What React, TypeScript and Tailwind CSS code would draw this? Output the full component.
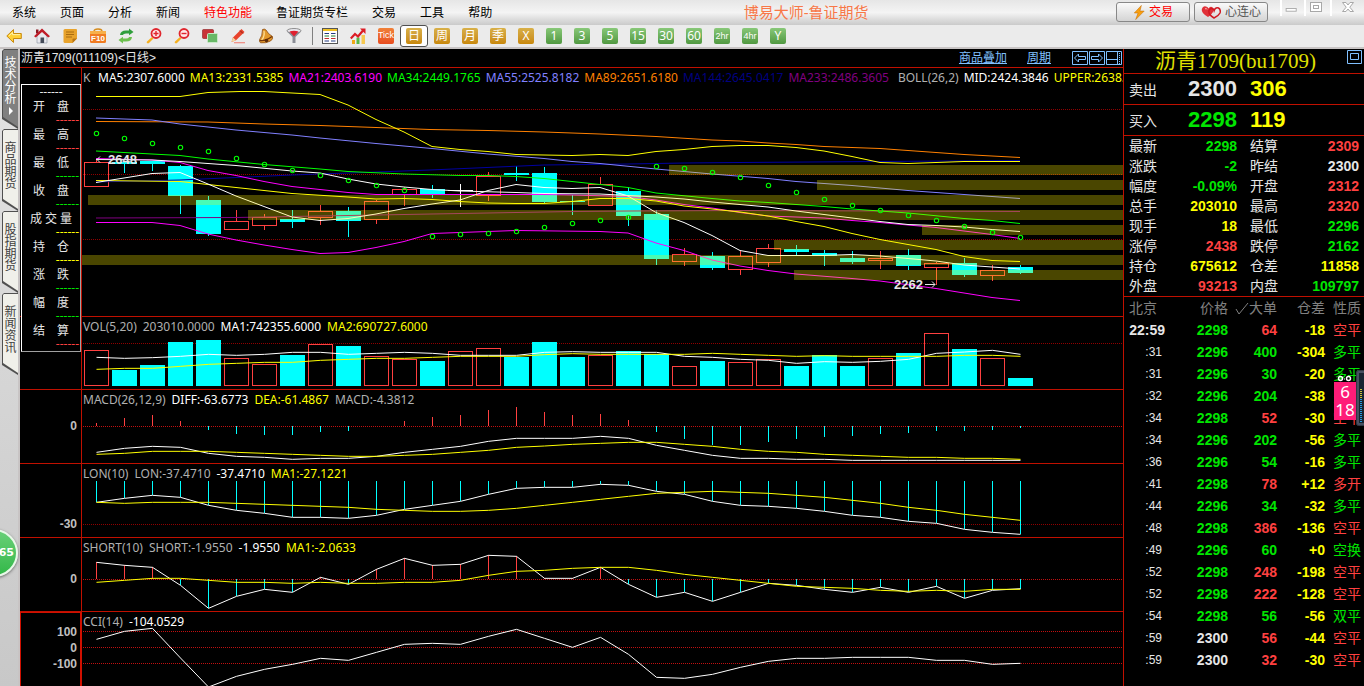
import React from "react";

const STEP = 28;
const FIRST = 14.5;
const px = (i: number) => FIRST + STEP * i;

/* ---------- price pane data (screen rows) ---------- */
const PRICE_TOP = 68;

// [kind, body top, body bottom, wick top, wick bottom]
type Candle = ["r" | "c" | "w", number, number, number, number];
const candles: Candle[] = [
  ["r", 162.5, 186.5, 160, 162], ["c", 162, 164, 162, 173], ["c", 161, 164, 161, 171], ["c", 166, 196, 165, 214],
  ["c", 200, 234, 196, 236], ["r", 221.5, 229.5, 210, 229], ["r", 217.5, 225.5, 214, 230], ["c", 219, 222, 210, 228],
  ["r", 211.5, 217.5, 205, 225], ["c", 211, 221, 207, 237], ["r", 201.5, 219.5, 200, 224], ["r", 189.5, 194.5, 187, 206],
  ["c", 189, 194, 185, 198], ["w", 190, 191, 184, 207], ["r", 176.5, 195.5, 172, 201], ["c", 173, 175, 166, 181],
  ["c", 173, 202, 167, 203], ["c", 201, 202, 195, 215], ["r", 184.5, 205.5, 177, 185], ["c", 191, 216, 187, 226],
  ["c", 214, 259, 210, 265], ["r", 254.5, 261.5, 248, 266], ["c", 256, 268, 252, 270], ["r", 256.5, 269.5, 251, 275],
  ["r", 248.5, 262.5, 244, 267], ["c", 249, 252, 245, 255], ["c", 253, 256, 250, 266], ["c", 258, 262, 251, 264],
  ["r", 258.5, 260.5, 251, 269], ["c", 255, 266, 249, 270], ["r", 263.5, 267.5, 262, 285], ["c", 263, 275, 258, 277],
  ["r", 270.5, 275.5, 265, 281], ["c", 267, 273, 265, 274],
];

const sar = [
  133.5, 138.5, 143.5, 147.5, 151.5, 158.5, 164.5, 170.5, 175.5, 180.5, 185.5, 190.5, 236.5, 234.5, 233.5, 231.5, 227.5,
  223.5, 220.5, 217.5, 166.5, 168.5, 172.5, 177.5, 185.5, 192.5, 199.5, 205.5, 210.5, 215.5, 220.5, 226.5, 232.5, 237.5,
];

// [left, top]
const bands: [number, number][] = [
  [88, 195], [248, 210], [82, 255], [669, 165], [817, 180], [922, 225], [774, 240], [794, 270],
];

const overlays: { color: string; pts: string }[] = [
  { color: "#800080", pts: "96,218 236,217.5 320,216 404,214.5 488,213 572,211.5 628,211 740,210.5 1020,211.5" },
  { color: "#0000a0", pts: "96,182 180,180 236,177.5 292,175 348,173 376,172 430,170 544,165 628,164 684,163 740,162.5 1020,160.5" },
  { color: "#ff8000", pts: "96,121.5 208,122 264,124 320,125.5 376,127.5 430,129.5 488,130.5 544,132 600,134 656,136.5 712,140 740,141 768,143 796,144.5 824,146.5 880,148.5 936,152.5 964,154.5 1020,157.5" },
  { color: "#8080ff", pts: "96,118 152,120 180,124 236,130 292,135 320,138 376,143.5 432,148.5 488,154 544,158.5 572,161.5 600,163.5 656,169 712,174 768,178.5 796,181.5 852,185.5 908,190.5 964,194.5 1020,198.5" },
  { color: "#00ff00", pts: "96,151 124,152.5 180,155.5 208,159 264,164.5 320,169 348,171.5 404,174 460,175.5 488,175.5 516,176.5 544,178.5 600,184.5 628,187.5 656,193 712,198.5 740,201 768,202.5 824,206.5 852,209 908,213 964,218.5 992,220.5 1020,223.5" },
  { color: "#ff00ff", pts: "96,158.5 152,160 180,162.5 208,170.5 236,175.5 264,181.5 292,186.5 348,192.5 376,194.5 544,194.5 572,195 628,196.5 656,200 684,204.5 712,208 740,212.5 768,216 796,217 824,218 852,220.5 880,222.5 908,225 936,227.5 964,231 992,234.5 1020,238.5" },
  { color: "#ffff00", pts: "96,180.5 180,181.5 208,184.5 236,187.5 292,193.5 348,197 376,199 404,198.5 432,199.5 460,201.5 488,203 516,203.5 544,203.5 572,201.5 600,198.5 628,198.5 656,201 684,206 740,212 768,216 796,221.5 824,226.5 852,233.5 880,239.5 908,244.5 936,249.5 964,256.5 992,260.5 1020,261.5" },
  { color: "#ffff00", pts: "96,96.5 180,96.5 208,92.5 240,91.5 264,91.5 292,93 320,94.5 348,105 376,119.5 404,132 432,146.5 460,149.5 488,151.5 516,154.5 544,155 572,155.5 600,154.5 628,155.5 656,151.5 684,149.5 712,146.5 740,145.5 768,145.5 796,147.5 824,151 852,156.5 880,162.5 908,163.5 936,162.5 964,161.5 1020,161.5" },
  { color: "#ff00ff", pts: "96,222.5 152,222.5 180,225.5 208,234 236,240 264,245 292,249.5 320,253.5 348,252.5 376,247.5 404,241.5 432,233.5 516,230.5 600,231.5 628,233 656,243 684,250.5 712,260 740,266 768,270.5 796,274 852,278.5 880,281 936,288.5 964,293 992,297.5 1020,300.5" },
  { color: "#ffffff", pts: "96,159.5 152,160 180,161.5 236,165.5 292,171 320,173 348,179 376,184 404,187 432,189.5 460,191 516,192.5 544,193.5 600,194 656,197 684,199 712,202 740,204.5 768,207 796,211 824,214.5 852,218 880,221.5 908,224.5 936,225.5 964,227 992,229.5 1020,231.5" },
  { color: "#ffffff", pts: "96,182.5 124,178 152,173.5 180,172.5 208,184 236,196 264,206.5 292,217 320,220.5 348,218.5 376,214 404,208.5 432,204 460,200 488,190.5 516,184.5 544,187.5 572,188.5 600,187.5 628,196 656,212.5 684,222.5 712,235.5 740,250.5 768,255.5 824,255.5 852,254.5 880,256 908,258.5 936,261 964,265 992,267 1020,269" },
];

/* ---------- indicator pane data, stored in thirds of a row counted from the top of the volume pane ---------- */
const volTops = [103, 162, 147, 78, 72, 127, 145, 117, 85, 90, 121, 130, 135, 106, 97, 123, 78, 123, 118, 105, 115, 151, 135, 139, 130, 150, 117, 150, 125, 111, 52, 99, 127, 186];
const volKinds = "rcccc" + "rrcrcr" + "rcrrcc" + "crccrc" + "rrcccr" + "crcrc";
const volMa1 = [124, 127, 125, 121, 115, 118, 115, 109, 109, 115, 112, 109, 112, 118, 118, 118, 109, 107, 109, 109, 109, 121, 124, 130, 133, 142, 137, 139, 136, 130, 112, 108, 103, 115];
const volMa2 = [160, 157, 157, 151, 145, 142, 139, 139, 133, 130, 127, 127, 124, 121, 121, 121, 116, 113, 115, 115, 115, 115, 112, 115, 118, 121, 119, 121, 121, 121, 121, 118, 118, 121];
const macd = [321, 306, 297, 315, 342, 354, 357, 357, 348, 345, 329, 315, 303, 297, 282, 273, 288, 297, 294, 312, 348, 369, 387, 387, 378, 369, 363, 360, 354, 351, 345, 345, 342, 336];
const diff = [409, 397, 391, 394, 412, 421, 424, 430, 427, 427, 421, 409, 400, 391, 376, 367, 367, 367, 361, 367, 388, 403, 418, 427, 427, 430, 430, 433, 433, 433, 433, 433, 433, 433];
const dea = [415, 412, 406, 406, 406, 409, 412, 415, 418, 421, 421, 418, 415, 409, 403, 394, 390, 385, 382, 379, 379, 385, 391, 400, 406, 409, 415, 418, 421, 424, 424, 427, 427, 430];
const lon = [559, 547, 538, 544, 568, 583, 592, 604, 604, 607, 598, 580, 568, 556, 535, 517, 514, 514, 505, 508, 526, 535, 556, 568, 571, 577, 586, 598, 604, 616, 622, 640, 649, 655];
const lonMa = [559, 562, 559, 559, 559, 562, 565, 568, 571, 574, 580, 583, 586, 586, 583, 577, 568, 559, 550, 541, 532, 529, 526, 529, 532, 538, 544, 553, 562, 574, 583, 595, 604, 613];
const short = [739, 748, 754, 808, 877, 841, 820, 829, 784, 805, 760, 727, 748, 745, 718, 721, 787, 787, 754, 805, 844, 829, 856, 829, 802, 808, 820, 829, 814, 829, 811, 847, 823, 818];
const shortMa = [799, 793, 787, 787, 793, 799, 799, 802, 799, 802, 802, 799, 799, 793, 778, 766, 763, 757, 754, 754, 763, 775, 784, 793, 802, 811, 814, 817, 823, 826, 823, 826, 820, 820];
const cci = [970, 946, 937, 1026, 1113, 1081, 1060, 1045, 1027, 1033, 1009, 985, 982, 985, 961, 940, 967, 994, 964, 1015, 1084, 1087, 1075, 1054, 1036, 1027, 1027, 1024, 1024, 1024, 1033, 1033, 1045, 1042];

const row = (v: number, top: number) => 316 + v / 3 - top;

function Grid({ y, color = "#c01010" }: { y: number; color?: string }) {
  return <line x1="1" x2="100%" y1={y} y2={y} stroke={color} strokeDasharray="1 1" shapeRendering="crispEdges" />;
}

function Series({ data, top, color }: { data: number[]; top: number; color: string }) {
  return <polyline fill="none" stroke={color} points={data.map((v, i) => `${px(i)},${row(v, top)}`).join(" ")} />;
}

function Sticks({ data, base, top, mono }: { data: number[]; base: number; top: number; mono?: boolean }) {
  return (
    <g shapeRendering="crispEdges">
      {data.map((v, i) => (
        <line key={i} x1={px(i)} x2={px(i)} y1={row(base, top)} y2={row(v, top)} stroke={!mono && v < base ? "#ff4040" : "#00ffff"} />
      ))}
    </g>
  );
}

function PriceChart() {
  const dx = -82;
  return (
    <svg className="block h-full w-full" role="img" aria-label="日线">
      <Grid y={41.5} color="#900000" />
      <Grid y={106.5} color="#900000" />
      <Grid y={171.5} color="#900000" />
      <g transform={`translate(0,${-PRICE_TOP})`} shapeRendering="crispEdges">
        {candles.map(([k, t, b, wt, wb], i) => {
          const x = px(i);
          if (k === "r")
            return (
              <g key={i} stroke="#ff4040" fill="none">
                {wt < t && <line x1={x} x2={x} y1={wt} y2={t} />}
                {wb > b && <line x1={x} x2={x} y1={b} y2={wb} />}
                <rect x={x - 12} y={t} width="24" height={b - t} />
              </g>
            );
          const color = k === "c" ? "#00ffff" : "#ffffff";
          return (
            <g key={i}>
              <line x1={x} x2={x} y1={wt} y2={wb} stroke={color} />
              <rect x={x - 12.5} y={t} width="25" height={b - t} fill={color} />
            </g>
          );
        })}
      </g>
      <g transform={`translate(${dx},${-PRICE_TOP})`}>
        {overlays.map((o, i) => (
          <polyline key={i} points={o.pts} stroke={o.color} fill="none" strokeLinejoin="round" />
        ))}
        {bands.map(([x, y]) => (
          <rect key={y} x={x} y={y} width="100%" height="10" fill="#fff000" fillOpacity="0.29" />
        ))}
        {sar.map((y, i) => (
          <circle key={i} cx={px(i) - dx} cy={y} r="2.2" fill="none" stroke="#00ff00" strokeWidth="1.1" />
        ))}
        <path d="M97 159.5h10M97 159.5l3-3M97 159.5l3 3" stroke="#e6e6e6" fill="none" />
        <path d="M925 284.5h10M935 284.5l-3-3M935 284.5l-3 3" stroke="#e6e6e6" fill="none" />
        <text x="108" y="164" fill="#e6e6e6" className="font-[Liberation_Sans,sans-serif] text-[13px] font-bold">2648</text>
        <text x="894" y="289" fill="#e6e6e6" className="font-[Liberation_Sans,sans-serif] text-[13px] font-bold">2262</text>
      </g>
    </svg>
  );
}

function VolumeChart() {
  return (
    <svg className="block h-full w-full" role="img" aria-label="VOL">
      <Grid y={26.5} color="#900000" />
      <g shapeRendering="crispEdges">
        {volTops.map((v, i) => {
          const t = Math.round(316 + v / 3) - 317;
          return volKinds[i] === "r" ? (
            <rect key={i} x={px(i) - 12} y={t + 0.5} width="24" height={68 - t} fill="none" stroke="#ff4040" />
          ) : (
            <rect key={i} x={px(i) - 12.5} y={t} width="25" height={69 - t} fill="#00ffff" />
          );
        })}
      </g>
      <Series data={volMa1} top={317} color="#ffffff" />
      <Series data={volMa2} top={317} color="#ffff00" />
    </svg>
  );
}

function MacdChart() {
  return (
    <svg className="block h-full w-full" role="img" aria-label="MACD">
      <Grid y={36.5} />
      <Sticks data={macd} base={331} top={390} />
      <Series data={diff} top={390} color="#ffffff" />
      <Series data={dea} top={390} color="#ffff00" />
    </svg>
  );
}

function LonChart() {
  return (
    <svg className="block h-full w-full" role="img" aria-label="LON">
      <Grid y={60.5} color="#900000" />
      <Sticks data={lon} base={495} top={464} mono />
      <Series data={lon} top={464} color="#ffffff" />
      <Series data={lonMa} top={464} color="#ffff00" />
    </svg>
  );
}

function ShortChart() {
  return (
    <svg className="block h-full w-full" role="img" aria-label="SHORT">
      <Grid y={41.5} />
      <Sticks data={short} base={790} top={538} />
      <Series data={short} top={538} color="#ffffff" />
      <Series data={shortMa} top={538} color="#ffff00" />
    </svg>
  );
}

function CciChart() {
  return (
    <svg className="block h-full w-full" role="img" aria-label="CCI">
      <Grid y={19.5} />
      <Grid y={35.5} />
      <Grid y={51.5} />
      <Series data={cci} top={612} color="#ffffff" />
    </svg>
  );
}

/* ---------- panes ---------- */
type Legend = [string, string][];

function Pane({ size, legend, legendGap = "gap-1.5", axis, axisClass = "", children }: {
  size: string;
  legend: Legend;
  legendGap?: string;
  axis?: string[];
  axisClass?: string;
  children: React.ReactNode;
}) {
  return (
    <section className={`flex ${size}`}>
      <div className={`w-[62px] shrink-0 border-r border-[#c01000] pr-1 text-right font-[Liberation_Sans,sans-serif] text-xs leading-4 font-bold text-[#c0c0c0] ${axisClass}`}>
        {axis?.map((a) => <div key={a}>{a}</div>)}
      </div>
      <div className="relative min-w-0 flex-1 overflow-hidden">
        {children}
        <div className={`absolute inset-x-0 top-0 flex h-5 items-center overflow-hidden pl-px text-xs whitespace-nowrap ${legendGap}`}>
          {legend.map(([cls, t]) => <span key={t} className={`shrink-0 ${cls}`}>{t}</span>)}
        </div>
      </div>
    </section>
  );
}

const G = "text-[#b0b0b0]";
const W = "text-white";
const Y = "text-[#ffff00]";

/* ---------- toolbar ---------- */
function Svg({ children }: { children: React.ReactNode }) {
  return <svg viewBox="0 0 16 16" className="h-4 w-4" aria-hidden="true">{children}</svg>;
}

const toolIcons: [string, React.ReactNode][] = [
  ["后退", <Svg><path d="M.8 8 7.500 1.500v4h7.800v5H7.500v4z" fill="#ffd035" stroke="#c88a10" strokeWidth="1" /><path d="M3 7.800 6.500 4.500V6.600h7.600" stroke="#fff2a8" fill="none" /></Svg>],
  ["首页", <Svg><path d="M3 8v7h10V8L8 3z" fill="#e9e9ee" stroke="#8890a0" strokeWidth=".6" /><path d="M2 1.500h2.500v4H2z" fill="#8a1620" /><path d="M0 8.200 8 .5l8 7.700-1.800 1.300L8 4 1.800 9.500z" fill="#c01c28" /><path d="M6.500 9.500h3.600V15H6.500z" fill="#444b58" /></Svg>],
  ["资讯", <Svg><path d="M1.500 2.500q0-1.500 1.500-1.500h11q1 0 1 1v8.500L10.500 15H3q-1.500 0-1.500-1.500z" fill="#e8a32c" /><path d="M15 10.500 10.500 15v-3.500q0-1 1-1z" fill="#b87614" /><path d="M4 4h8M4 6.500h8M4 9h6" stroke="#a96c10" strokeWidth="1" /></Svg>],
  ["F10", <Svg><path d="M4 3.500q0-2.500 4-2.500t4 2.500" stroke="#d58b1c" fill="none" strokeWidth="1.400" /><rect x="0" y="3" width="16" height="12" rx="1.500" fill="#f07b22" /><rect x="0" y="3" width="16" height="3" fill="#f7b04a" /><text x="8" y="13" textAnchor="middle" fill="#fff" className="font-[Liberation_Sans,sans-serif] text-[8px] font-bold">F10</text></Svg>],
  ["刷新", <Svg><path d="M2 7q.5-4.500 6-4.500h3V.500L15.500 4 11 7.300V5.500H8Q5.500 5.500 4.800 7z" fill="#2f9e3c" /><path d="M14 9q-.5 4.500-6 4.500H5v2L.5 12 5 8.700v1.800h3q2.500 0 3.200-1.500z" fill="#6cc04e" /></Svg>],
  ["放大", <Svg><path d="M1 13.500 6 9l1.500 1.500L3 15q-1 .8-2 0-.7-.7 0-1.500z" fill="#f5b020" /><circle cx="10" cy="5.500" r="4.500" fill="#ffe8e8" stroke="#e0262e" strokeWidth="1.800" /><path d="M7.500 5.500h5M10 3v5" stroke="#e0262e" strokeWidth="1.400" /></Svg>],
  ["缩小", <Svg><path d="M1 13.500 6 9l1.500 1.500L3 15q-1 .8-2 0-.7-.7 0-1.500z" fill="#f5b020" /><circle cx="10" cy="5.500" r="4.500" fill="#ffe8e8" stroke="#e0262e" strokeWidth="1.800" /><path d="M7.500 5.500h5" stroke="#e0262e" strokeWidth="1.400" /></Svg>],
  ["叠加", <Svg><rect x=".5" y="1.500" width="11" height="9" rx="1" fill="#c83438" stroke="#8c1c20" strokeWidth=".6" /><rect x="5.500" y="5.500" width="10" height="9" rx="1" fill="#69b867" stroke="#c9e8c8" /></Svg>],
  ["画线", <Svg><path d="M1.500 14 3 9.500 11.500 1l3 3L6 12.300z" fill="#e8432c" /><path d="M1.500 14 3 9.500 6 12.300z" fill="#f4d9a0" /><path d="m10 2.500 3 3" stroke="#8c2016" /><path d="M4 14.700h11" stroke="#f08a80" strokeWidth="1.200" /></Svg>],
  ["预警", <Svg><path d="M4.500 1.500Q6.500.5 8 2q2 4 6.500 6.500.8 2.500-2 4.500Q8 15.500 2.500 14.800q-1.500-1.300-1-3Q4.500 8 4.500 1.500z" fill="#e2992c" stroke="#8a4a10" strokeWidth=".8" /><path d="M6 3q1 5-2.500 9.500" stroke="#ffe09a" fill="none" strokeWidth="1.200" /><path d="M2 12.500q6 .5 12-4" stroke="#6f3208" fill="none" strokeWidth="1.300" /><circle cx="8.500" cy="12.500" r="1.800" fill="#5b2a0a" /></Svg>],
  ["过滤", <Svg><path d="M1 3.500 6.500 9v6h3V9L15 3.500Q8 7 1 3.500z" fill="#8b8d96" /><ellipse cx="8" cy="2.800" rx="7" ry="2.300" fill="#e8e8ee" stroke="#777" strokeWidth=".8" /><path d="M3.500 3.500q4.500-1.500 9 0L8 8.500z" fill="#e02030" /></Svg>],
];

const goldKeys = ["日", "周", "月", "季", "X"];
const greenKeys = ["1", "3", "5", "15", "30", "60", "2hr", "4hr", "Y"];

function Toolbar() {
  return (
    <div className="flex h-[22px] shrink-0 items-center bg-[#ebebeb]" role="toolbar" aria-label="工具栏">
      {toolIcons.map(([name, icon]) => (
        <button key={name} type="button" aria-label={name} className="flex w-7 justify-center">{icon}</button>
      ))}
      <span className="flex h-[18px] w-2 justify-center"><span className="w-px bg-[#808080]" /></span>
      <button type="button" aria-label="报价" className="flex w-7 justify-center">
        <Svg><rect x=".5" y=".5" width="15" height="15" fill="#fff" stroke="#555" /><path d="M1 2h14" stroke="#f0c020" strokeWidth="2" /><path d="M2.500 5.500h4.500M9 5.500h4.500M2.500 13h4.500M9 13h4.500" stroke="#223a80" /><path d="M2.500 8h4.500M9 8h4.500" stroke="#208030" /><path d="M2.500 10.500h4.500M9 10.500h4.500" stroke="#c03030" /></Svg>
      </button>
      <button type="button" aria-label="走势" className="flex w-7 justify-center">
        <Svg><path d="M2 12h3v4H2z" fill="#f0a818" /><path d="M6.500 9.500h3V16h-3z" fill="#58b848" /><path d="M11.500 7h3.500v9h-3.500z" fill="#f6c850" /><path d="M.8 10.500 5 6l3 2.500 5-6" stroke="#dc1c24" strokeWidth="2.200" fill="none" /><path d="M10 .5h5.500V6z" fill="#dc1c24" /></Svg>
      </button>
      <button type="button" className="flex w-7 justify-center">
        <span className="flex h-4 w-4 items-center justify-center rounded-[2px] bg-linear-to-b from-[#f08038] to-[#e84c20] font-[Liberation_Sans,sans-serif] text-[9px] text-white">Tick</span>
      </button>
      {goldKeys.map((k, i) => (
        <button key={k} type="button" className={i === 0 ? "flex h-[22px] w-7 items-center justify-center rounded-[3px] border border-[#505050] bg-white" : "flex w-7 justify-center"}>
          <span className="flex h-4 w-4 items-center justify-center rounded-[2px] bg-linear-to-b from-[#d8b048] to-[#c88808] text-xs leading-4 text-white">{k}</span>
        </button>
      ))}
      {greenKeys.map((k) => (
        <button key={k} type="button" className="flex w-7 justify-center">
          <span className={`flex h-4 w-4 items-center justify-center rounded-[2px] bg-linear-to-b from-[#88c878] to-[#509840] text-white ${k.length > 2 ? "font-[Liberation_Sans,sans-serif] text-[9px]" : "text-xs"} leading-4`}>{k}</span>
        </button>
      ))}
    </div>
  );
}

function MenuBar() {
  const menus = ["系统", "页面", "分析", "新闻", "特色功能", "鲁证期货专栏", "交易", "工具", "帮助"];
  return (
    <header className="flex h-[25px] shrink-0 items-start bg-linear-to-b from-[#e6e6e6] via-[#f4f4f4] to-[#cacaca]">
      <nav className="flex h-[25px] items-center gap-6 pl-3 text-xs text-black">
        {menus.map((m) => (
          <button key={m} type="button" className={m === "特色功能" ? "text-[#ff0000]" : ""}>{m}</button>
        ))}
      </nav>
      <h1 className="flex h-[25px] flex-1 items-center justify-center pl-1 text-[15px] text-[#f87848]">博易大师-鲁证期货</h1>
      <div className="flex gap-1 pt-0.5">
        <button type="button" className="flex h-5 w-[74px] items-center justify-center gap-1 rounded-[3px] border border-[#888] bg-linear-to-b from-[#fafafa] to-[#d4d4d4] text-xs text-[#ff0000]">
          <svg viewBox="0 0 12 16" className="h-[15px] w-3" aria-hidden="true"><path d="M8.500.5 1 8.500h4L2.500 15.500 11.500 6.500H7z" fill="#f8a010" stroke="#c87008" strokeWidth=".6" /></svg>
          交易
        </button>
        <button type="button" className="flex h-5 w-[74px] items-center justify-center gap-1 rounded-[3px] border border-[#888] bg-linear-to-b from-[#fafafa] to-[#d4d4d4] text-xs text-[#555]">
          <svg viewBox="0 0 20 14" className="h-[14px] w-5" aria-hidden="true"><path d="M7 12Q0 8 .8 4 2 .5 5 1.500q2 .5 2.500 2Q9 1 11 2q3 1.500 1 5-1.500 3-5 5z" fill="#e03038" /><path d="M13 13Q7 9.500 8 5.500 9.500 2.500 12 4q1 .5 1.200 1.500Q14.500 2 17.500 3q2.500 1.500 1.500 5-1.500 3-6 5z" fill="none" stroke="#d01822" strokeWidth="1.500" /><path d="M4 4q1.500-1.500 2 .5" stroke="#ffb0b0" fill="none" /></svg>
          心连心
        </button>
      </div>
      <div className="ml-3 flex h-4 text-[#a8a8a8]">
        <button type="button" aria-label="最小化" className="flex w-6 justify-center border-l-2 border-white"><svg viewBox="0 0 24 16" className="h-4 w-6" aria-hidden="true"><rect x="4.500" y="8.500" width="11" height="3" fill="#fff" stroke="currentColor" /></svg></button>
        <button type="button" aria-label="还原" className="flex w-[26px] justify-center border-l-2 border-white"><svg viewBox="0 0 24 16" className="h-4 w-6" aria-hidden="true"><rect x="4.500" y="2.500" width="11" height="9" fill="#fff" stroke="currentColor" /><rect x="7.500" y="5.500" width="5" height="3" fill="none" stroke="currentColor" /></svg></button>
        <button type="button" aria-label="关闭" className="flex w-[34px] justify-center border-l-2 border-white"><svg viewBox="0 0 16 16" className="h-4 w-4" aria-hidden="true"><path d="M2.500 2.500h3.500l2 2.500 2-2.500h3.500L9.800 7.200l3.700 4.300H10L8 9l-2 2.500H2.500l3.700-4.300z" fill="#fff" stroke="currentColor" /></svg></button>
      </div>
    </header>
  );
}

/* ---------- left rail ---------- */
function Rail() {
  const tabs = ["技术分析", "商品期货", "股指期货", "新闻资讯"];
  return (
    <aside className="relative w-5 shrink-0 border-r-2 border-[#c8c4c4] bg-linear-to-b from-[#e4e4e4] to-[#c8c8c8]">
      <div className="flex flex-col pl-0.5" role="tablist" aria-orientation="vertical">
        {tabs.map((t, i) => (
          <button
            key={t}
            type="button"
            role="tab"
            aria-selected={i === 0}
            className={`flex w-4 flex-col bg-[#505050] pt-px pb-0.5 pl-px [clip-path:polygon(0_2px,2px_0,100%_0,100%_100%,0_calc(100%_-_10px))] ${i === 0 ? "h-20" : "h-[82px]"}`}
          >
            <span className={`flex w-full flex-1 flex-col items-center text-xs leading-3 [clip-path:polygon(0_1px,1px_0,100%_0,100%_100%,0_calc(100%_-_10px))] ${i === 0 ? "bg-[#808080] pt-[7px] text-white" : "bg-[#f0f0ea] pt-3 text-[#404040]"}`}>
              {t.split("").map((c) => <span key={c}>{c}</span>)}
              {i === 0 && <svg viewBox="0 0 6 8" className="mt-0.5 h-2 w-1.5" aria-hidden="true"><path d="M1 0v8l4-4z" fill="#fff" /></svg>}
            </span>
          </button>
        ))}
      </div>
      <div className="absolute top-[480px] -left-[30px] flex h-12 w-12 items-center justify-end rounded-full border-2 border-[#e8f8e8] bg-linear-to-b from-[#68d078] to-[#30b848] pr-0.5 font-[DejaVu_Sans,sans-serif] text-[11px] font-bold text-white shadow-[0_1px_3px_#666]">65</div>
    </aside>
  );
}

/* ---------- floating data window ---------- */
const infoRows: [string, string][] = [
  ["开盘", "text-[#ff4040]"], ["最高", "text-[#ff4040]"], ["最低", "text-[#00e600]"], ["收盘", "text-[#00e600]"],
  ["成交量", "text-[#ffff00]"], ["持仓", "text-[#ffff00]"], ["涨跌", "text-[#00e600]"], ["幅度", "text-[#00e600]"], ["结算", "text-[#ff4040]"],
];

function DataWindow() {
  return (
    <div className="absolute top-[35px] left-px w-[60px] border border-t-white border-r-[#a0a0a0] border-b-[#a0a0a0] border-l-white bg-black text-xs text-[#e6e6e6]">
      <div className="h-[14px] text-center leading-[14px]">------</div>
      {infoRows.map(([label, color]) => (
        <div key={label}>
          <div className={`flex h-4 items-center justify-center leading-4 ${label.length === 3 ? "gap-[3px]" : "gap-3"}`}>
            {label.split("").map((c) => <span key={c}>{c}</span>)}
          </div>
          <div className={`h-3 pr-px text-right leading-[10px] ${color}`}>------</div>
        </div>
      ))}
    </div>
  );
}

/* ---------- quote panel ---------- */
const RED = "text-[#ff4040]";
const GRN = "text-[#00e600]";
const YEL = "text-[#ffff00]";
const WHT = "text-[#e6e6e6]";

const quotes: [string, string, string, string, string, string][] = [
  ["最新", "2298", GRN, "结算", "2309", RED],
  ["涨跌", "-2", GRN, "昨结", "2300", WHT],
  ["幅度", "-0.09%", GRN, "开盘", "2312", RED],
  ["总手", "203010", YEL, "最高", "2320", RED],
  ["现手", "18", YEL, "最低", "2296", GRN],
  ["涨停", "2438", RED, "跌停", "2162", GRN],
  ["持仓", "675612", YEL, "仓差", "11858", YEL],
  ["外盘", "93213", RED, "内盘", "109797", GRN],
];

const ticks: [string, string, string, string, string, string, string][] = [
  ["22:59", "2298", GRN, "64", RED, "-18", "空平"],
  [":31", "2296", GRN, "400", GRN, "-304", "多平"],
  [":31", "2296", GRN, "30", GRN, "-20", "多平"],
  [":32", "2296", GRN, "204", GRN, "-38", "多平"],
  [":34", "2298", GRN, "52", RED, "-30", "空平"],
  [":34", "2296", GRN, "202", GRN, "-56", "多平"],
  [":36", "2296", GRN, "54", GRN, "-16", "多平"],
  [":41", "2298", GRN, "78", RED, "+12", "多开"],
  [":44", "2296", GRN, "34", GRN, "-32", "多平"],
  [":48", "2298", GRN, "386", RED, "-136", "空平"],
  [":49", "2296", GRN, "60", GRN, "+0", "空换"],
  [":52", "2298", GRN, "248", RED, "-198", "空平"],
  [":52", "2298", GRN, "222", RED, "-128", "空平"],
  [":54", "2298", GRN, "56", GRN, "-56", "双平"],
  [":59", "2300", WHT, "56", RED, "-44", "空平"],
  [":59", "2300", WHT, "32", RED, "-30", "空平"],
];

const NUM = "font-[Liberation_Sans,sans-serif] font-bold";

function QuotePanel() {
  return (
    <aside className="relative w-[241px] shrink-0 overflow-hidden border-l border-[#c01000] text-sm text-[#e6e6e6]">
      <div className="flex h-[25px] items-center border-b border-[#c01000]">
        <h2 className="flex-1 text-center font-[Liberation_Serif,Noto_Sans_CJK_SC,serif] text-[21px] leading-6 text-[#e0e000]">沥青1709(bu1709)</h2>
        <button type="button" aria-label="最大化" className="mr-0.5 mb-2">
          <svg viewBox="0 0 15 14" className="h-[14px] w-[15px]" aria-hidden="true"><path d="M.5.5h14v13H.5zM3.500 3.500h8v6h-8z" fill="none" stroke="#80c0ff" /></svg>
        </button>
      </div>
      {[["卖出", "2300", "306", WHT], ["买入", "2298", "119", GRN]].map(([l, p, q, c]) => (
        <div key={l} className={`flex h-[31px] items-center border-b border-[#c01000] pl-[5px] text-[22px] ${NUM}`}>
          <span className="w-7 font-[Noto_Sans_CJK_SC,sans-serif] text-sm font-normal">{l}</span>
          <span className={`w-20 text-right ${c}`}>{p}</span>
          <span className="pl-[13px] text-[#ffff00]">{q}</span>
        </div>
      ))}
      <dl className="border-b border-[#c01000]">
        {quotes.map(([a, av, ac, b, bv, bc]) => (
          <div key={a} className="flex h-5 items-center pr-[5px] pl-[5px]">
            <dt className="w-7">{a}</dt>
            <dd className={`w-20 text-right ${NUM} ${ac}`}>{av}</dd>
            <dt className="ml-[13px] w-7">{b}</dt>
            <dd className={`flex-1 text-right ${NUM} ${bc}`}>{bv}</dd>
          </div>
        ))}
      </dl>
      <table className="w-full table-fixed border-collapse">
        <colgroup>
          <col className="w-[41px]" />
          <col className="w-[63px]" />
          <col className="w-[49px]" />
          <col className="w-12" />
          <col />
        </colgroup>
        <thead>
          <tr className="h-[22px] leading-[22px] text-[#808080]">
            <th className="p-0 pl-[5px] text-left font-normal">北京</th>
            <th className="p-0 text-right font-normal">价格</th>
            <th className="p-0 font-normal"><span className="flex justify-end whitespace-nowrap"><svg viewBox="0 0 14 16" className="mt-1 h-4 w-[14px]" aria-hidden="true"><path d="m1 8 3 5L13 2" fill="none" stroke="#808080" /></svg>大单</span></th>
            <th className="p-0 text-right font-normal">仓差</th>
            <th className="p-0 pr-[3px] text-right font-normal">性质</th>
          </tr>
        </thead>
        <tbody>
          {ticks.map(([t, p, pc, v, vc, d, n], i) => (
            <tr key={i} className="h-[22px] leading-[22px]">
              <td className={i === 0 ? `p-0 text-right ${NUM}` : "p-0 pr-[3px] text-right font-[Liberation_Sans,sans-serif] text-xs leading-[22px]"}>{t}</td>
              <td className={`p-0 text-right ${NUM} ${pc}`}>{p}</td>
              <td className={`p-0 text-right ${NUM} ${vc}`}>{v}</td>
              <td className={`p-0 text-right text-[#ffff00] ${NUM}`}>{d}</td>
              <td className={`p-0 pr-[3px] text-right ${vc}`}>{n}</td>
            </tr>
          ))}
        </tbody>
      </table>
      <div className="absolute top-[321px] right-0 flex items-start">
        <div className="flex flex-col items-center pt-1">
          <svg viewBox="0 0 22 8" className="h-2 w-[22px]" aria-hidden="true"><circle cx="6.500" cy="4.500" r="2" fill="none" stroke="#fff" strokeWidth="1.500" /><circle cx="14.500" cy="4.500" r="2" fill="none" stroke="#fff" strokeWidth="1.500" /><path d="M10 5h1" stroke="#fff" /></svg>
          <div className="flex h-[38px] w-[22px] flex-col items-center justify-center bg-[#ff1c78] text-[17px] leading-[18px] text-white">
            <span>6</span>
            <span>18</span>
          </div>
        </div>
        <svg viewBox="0 0 8 56" className="h-14 w-2" aria-hidden="true">
          <rect x=".5" y=".5" width="9" height="55" rx="2" fill="#485060" stroke="#303844" />
          <rect x="3" y="3" width="5" height="50" fill="#182430" />
          <path d="M5 19v9" stroke="#c8c040" strokeWidth="2" strokeDasharray="1 1" />
          <path d="M5 29v24" stroke="#2898e0" strokeWidth="2" strokeDasharray="1 1" />
        </svg>
      </div>
    </aside>
  );
}

export default function App() {
  return (
    <div className="flex h-screen flex-col overflow-hidden bg-black font-[Noto_Sans,Noto_Sans_CJK_SC,sans-serif]">
      <MenuBar />
      <Toolbar />
      <div className="h-0.5 shrink-0 bg-[#c8c4c4]" />
      <div className="flex min-h-0 flex-1">
        <Rail />
        <main className="relative flex min-w-0 flex-1 flex-col">
          <div className="flex h-[19px] shrink-0 items-center border-b border-[#c01000] pr-px pl-px font-[Liberation_Sans,Noto_Sans_CJK_SC,sans-serif] text-xs text-[#e6e6e6]">
            <h2 className="flex-1 leading-4">沥青1709(011109)&lt;日线&gt;</h2>
            <a href="#overlay" className="text-[#80c0ff] underline">商品叠加</a>
            <a href="#period" className="ml-5 text-[#80c0ff] underline">周期</a>
            <div className="ml-[21px] flex gap-px">
              <button type="button" aria-label="向左"><svg viewBox="0 0 16 14" className="h-[14px] w-4" aria-hidden="true"><path d="M.5.500h15v13H.5zM2.500 7l4-4v2.500h7v3h-7V11z" fill="none" stroke="#80c0ff" /></svg></button>
              <button type="button" aria-label="向右"><svg viewBox="0 0 16 14" className="h-[14px] w-4" aria-hidden="true"><path d="M.5.500h15v13H.5zM13.500 7l-4-4v2.500h-7v3h7V11z" fill="none" stroke="#80c0ff" /></svg></button>
              <button type="button" aria-label="布局"><svg viewBox="0 0 16 14" className="h-[14px] w-4" aria-hidden="true"><path d="M.5.500h15v13H.5zM.5 8.500h11M11.500.500v13" fill="none" stroke="#80c0ff" /><path d="M13.500 2v11" stroke="#80c0ff" strokeDasharray="1 1" /></svg></button>
            </div>
          </div>
          <Pane
            size="h-[248px] shrink-0"
            legendGap="gap-[5px]"
            legend={[
              [`w-[10px] ${G}`, "K"], [W, "MA5:2307.6000"], [Y, "MA13:2331.5385"], ["text-[#ff00ff]", "MA21:2403.6190"], ["text-[#00ff00]", "MA34:2449.1765"],
              ["text-[#8080ff]", "MA55:2525.8182"], ["text-[#ff8000]", "MA89:2651.6180"], ["text-[#000080]", "MA144:2645.0417"], ["text-[#800080]", "MA233:2486.3605"],
              [`ml-1 ${G}`, "BOLL(26,2)"], [W, "MID:2424.3846"], [Y, "UPPER:2638.9042"],
            ]}
          >
            <PriceChart />
          </Pane>
          <Pane size="h-[73px] shrink-0 border-t border-[#c01000]" legend={[[G, "VOL(5,20)"], [G, "203010.0000"], [W, "MA1:742355.6000"], [Y, "MA2:690727.6000"]]}>
            <VolumeChart />
          </Pane>
          <Pane size="h-[74px] shrink-0 border-t border-[#c01000]" axis={["0"]} axisClass="pt-7" legend={[[G, "MACD(26,12,9)"], [W, "DIFF:-63.6773"], [Y, "DEA:-61.4867"], [G, "MACD:-4.3812"]]}>
            <MacdChart />
          </Pane>
          <Pane size="h-[74px] shrink-0 border-t border-[#c01000]" axis={["-30"]} axisClass="pt-[52px]" legend={[[G, "LON(10)"], [G, "LON:-37.4710"], [W, "-37.4710"], [Y, "MA1:-27.1221"]]}>
            <LonChart />
          </Pane>
          <Pane size="h-[74px] shrink-0 border-t border-[#c01000]" axis={["0"]} axisClass="pt-[33px]" legend={[[G, "SHORT(10)"], [G, "SHORT:-1.9550"], [W, "-1.9550"], [Y, "MA1:-2.0633"]]}>
            <ShortChart />
          </Pane>
          <Pane size="min-h-0 flex-1 border-t border-[#c01000]" axis={["100", "0", "-100"]} axisClass="border-t border-l border-r-2! border-[#d01000] pt-[11px] pr-[3px]!" legend={[[G, "CCI(14)"], [W, "-104.0529"]]}>
            <CciChart />
          </Pane>
          <DataWindow />
        </main>
        <QuotePanel />
      </div>
    </div>
  );
}
